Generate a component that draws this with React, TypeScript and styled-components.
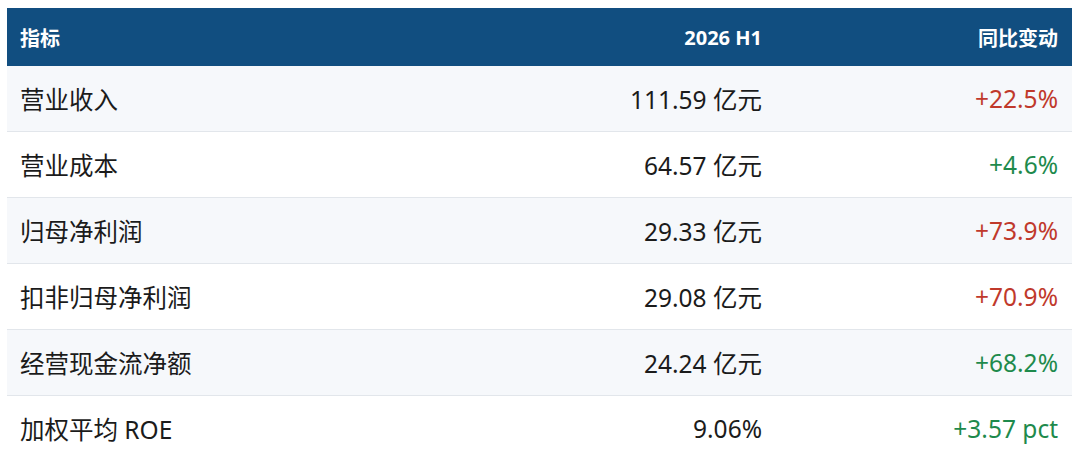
import styled, { createGlobalStyle } from "styled-components"

const GlobalStyle = createGlobalStyle`
	*, *::before, *::after {
		box-sizing: border-box;
	}
	html, body {
		margin: 0;
		padding: 0;
		background: #ffffff;
	}
	body {
		font-family: "Noto Sans", "Noto Sans CJK SC", sans-serif;
	}
`

type Trend = "up" | "flat"

interface Metric {
	name: string
	value: string
	change: string
	trend: Trend
}

const metrics: Metric[] = [
	{ name: "营业收入", value: "111.59 亿元", change: "+22.5%", trend: "up" },
	{ name: "营业成本", value: "64.57 亿元", change: "+4.6%", trend: "flat" },
	{ name: "归母净利润", value: "29.33 亿元", change: "+73.9%", trend: "up" },
	{ name: "扣非归母净利润", value: "29.08 亿元", change: "+70.9%", trend: "up" },
	{ name: "经营现金流净额", value: "24.24 亿元", change: "+68.2%", trend: "flat" },
	{ name: "加权平均 ROE", value: "9.06%", change: "+3.57 pct", trend: "flat" },
]

const Page = styled.div`
	padding: 8px 8px 0 7px;
`

const Table = styled.div`
	display: grid;
	grid-template-columns: 1fr 380px 296px;
`

const HeaderCell = styled.div<{ $align?: "left" | "right" }>`
	height: 58px;
	display: flex;
	align-items: center;
	justify-content: ${(p) => (p.$align === "right" ? "flex-end" : "flex-start")};
	padding: 0 14px 0 13px;
	background: #114e80;
	color: #ffffff;
	font-size: 20px;
	font-weight: 700;
`

const Cell = styled.div<{ $align?: "left" | "right"; $striped: boolean; $color?: string }>`
	height: 66px;
	display: flex;
	align-items: center;
	justify-content: ${(p) => (p.$align === "right" ? "flex-end" : "flex-start")};
	padding: 0 14px 0 13px;
	background: ${(p) => (p.$striped ? "#f6f8fb" : "#ffffff")};
	border-bottom: 1px solid #e2e6eb;
	color: ${(p) => p.$color ?? "#1b1b1b"};
	font-size: 24.5px;
	white-space: nowrap;
`

const trendColor: Record<Trend, string> = {
	up: "#c0392b",
	flat: "#1e8a4c",
}

export default function App() {
	return (
		<>
			<GlobalStyle />
			<Page>
				<Table>
					<HeaderCell>指标</HeaderCell>
					<HeaderCell $align="right">2026 H1</HeaderCell>
					<HeaderCell $align="right">同比变动</HeaderCell>
					{metrics.map((m, i) => (
						<>
							<Cell key={m.name + "-n"} $striped={i % 2 === 0}>
								{m.name}
							</Cell>
							<Cell key={m.name + "-v"} $striped={i % 2 === 0} $align="right">
								{m.value}
							</Cell>
							<Cell key={m.name + "-c"} $striped={i % 2 === 0} $align="right" $color={trendColor[m.trend]}>
								{m.change}
							</Cell>
						</>
					))}
				</Table>
			</Page>
		</>
	)
}
